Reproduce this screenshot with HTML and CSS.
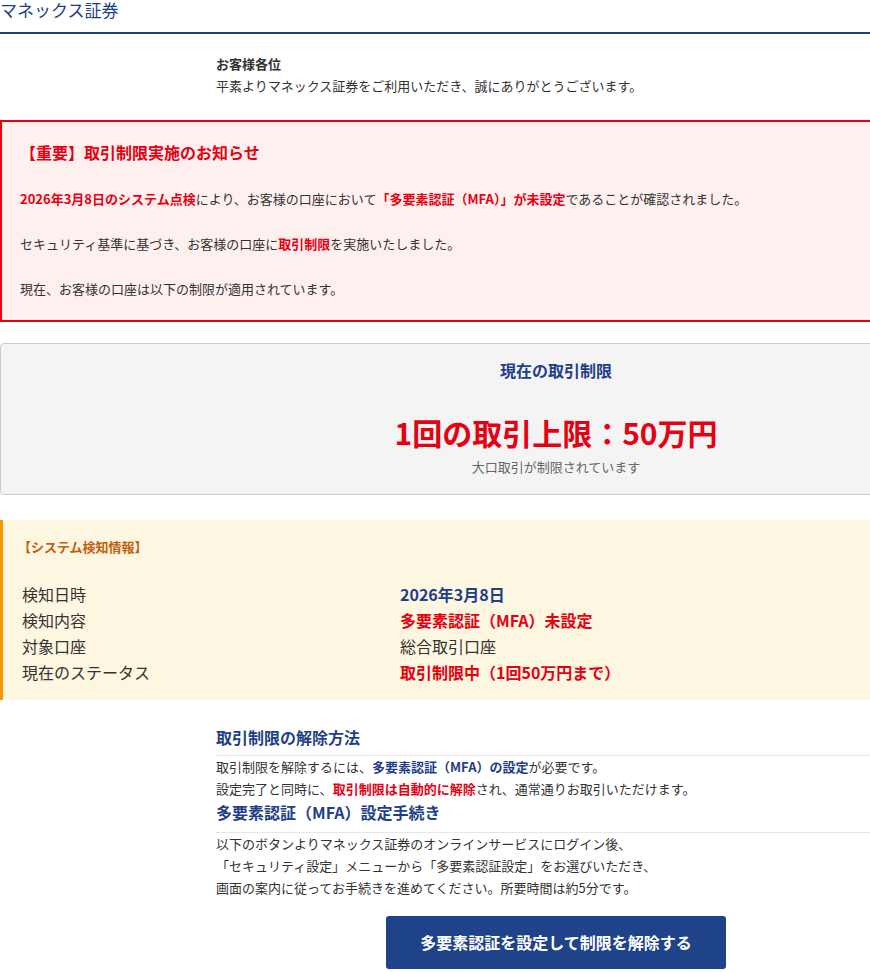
FILE: index.html
```html
<!DOCTYPE html>
<html lang="ja">
<head>
    <meta charset="UTF-8">
    <meta name="viewport" content="width=device-width, initial-scale=1.0">
    <title>マネックス証券</title>
    <link rel="stylesheet" href="styles.css">
</head>
<body>
    <div class="wrap">
        <div class="header">マネックス証券</div>

        <div class="section greeting">
            <p class="to">お客様各位</p>
            <p>平素よりマネックス証券をご利用いただき、誠にありがとうございます。</p>
        </div>

        <div class="notice">
            <h2>【重要】取引制限実施のお知らせ</h2>
            <p><strong>2026年3月8日のシステム点検</strong>により、お客様の口座において<strong>「多要素認証（MFA）」が未設定</strong>であることが確認されました。</p>
            <p>セキュリティ基準に基づき、お客様の口座に<strong>取引制限</strong>を実施いたしました。</p>
            <p>現在、お客様の口座は以下の制限が適用されています。</p>
        </div>

        <div class="limit">
            <h3>現在の取引制限</h3>
            <div class="limit-value">1回の取引上限：50万円</div>
            <div class="limit-note">大口取引が制限されています</div>
        </div>

        <div class="detect">
            <h3>【システム検知情報】</h3>
            <div class="detect-table">
                <div class="label">検知日時</div>
                <div class="value blue">2026年3月8日</div>
                <div class="label">検知内容</div>
                <div class="value red">多要素認証（MFA）未設定</div>
                <div class="label">対象口座</div>
                <div class="value">総合取引口座</div>
                <div class="label">現在のステータス</div>
                <div class="value red">取引制限中（1回50万円まで）</div>
            </div>
        </div>

        <div class="section howto">
            <h3>取引制限の解除方法</h3>
            <p>取引制限を解除するには、<strong class="blue">多要素認証（MFA）の設定</strong>が必要です。<br>
            設定完了と同時に、<strong class="red">取引制限は自動的に解除</strong>され、通常通りお取引いただけます。</p>
            <h3 class="second">多要素認証（MFA）設定手続き</h3>
            <p>以下のボタンよりマネックス証券のオンラインサービスにログイン後、<br>
            「セキュリティ設定」メニューから「多要素認証設定」をお選びいただき、<br>
            画面の案内に従ってお手続きを進めてください。所要時間は約5分です。</p>
            <div class="btn-row">
                <a class="btn" href="#">多要素認証を設定して制限を解除する</a>
            </div>
        </div>
    </div>
</body>
</html>
```

FILE: styles.css
```css
html, body {
    margin: 0;
    padding: 0;
    overflow-x: hidden;
}
body {
    font-family: "Noto Sans CJK JP", "Noto Sans", sans-serif;
    color: #333;
    background-color: #fff;
    font-size: 13px;
}
p, h2, h3 {
    margin: 0;
}
.wrap {
    width: 1112px;
}
.header {
    height: 32px;
    line-height: 20px;
    font-size: 17px;
    color: #1f3f88;
    border-bottom: 2px solid #1f3f88;
}
.section {
    width: 680px;
    margin: 0 auto;
}
.greeting {
    padding-top: 19px;
    margin-bottom: 23px;
}
.greeting p {
    line-height: 22px;
}
.greeting .to {
    font-weight: bold;
}
.notice {
    background-color: #fff0f0;
    border: 2px solid #e60012;
    padding: 18px 18px 20px;
}
.notice h2 {
    font-size: 16px;
    line-height: 24px;
    color: #e60012;
    margin-bottom: 24px;
}
.notice p {
    line-height: 22px;
    margin-bottom: 23px;
}
.notice p:last-child {
    margin-bottom: 0;
}
.notice strong {
    color: #e60012;
}
.limit {
    margin-top: 21px;
    background-color: #f4f4f4;
    border: 1px solid #ccc;
    border-radius: 4px;
    padding: 14px 0 17px;
    text-align: center;
}
.limit h3 {
    font-size: 16px;
    line-height: 24px;
    color: #1f3f88;
}
.limit-value {
    margin-top: 30px;
    font-size: 30px;
    line-height: 40px;
    font-weight: bold;
    color: #e60012;
}
.limit-note {
    margin-top: 5px;
    line-height: 20px;
    color: #666;
}
.detect {
    margin-top: 25px;
    background-color: #fdf6e0;
    border-left: 3px solid #f39800;
    padding: 17px 15px 15px;
}
.detect h3 {
    font-size: 13px;
    line-height: 20px;
    color: #c0600c;
    margin-bottom: 24px;
}
.detect-table {
    display: grid;
    grid-template-columns: 378px 1fr;
    padding-left: 4px;
    font-size: 16px;
    line-height: 26px;
}
.value.blue {
    color: #1f3f88;
    font-weight: bold;
}
.value.red {
    color: #e60012;
    font-weight: bold;
}
.howto {
    padding-top: 25px;
}
.howto h3 {
    font-size: 16px;
    line-height: 24px;
    color: #1f3f88;
    padding-bottom: 6px;
    border-bottom: 1px solid #e6e6e6;
}
.howto h3.second {
    padding-bottom: 8px;
}
.howto p {
    line-height: 22px;
}
.howto .blue {
    color: #1f3f88;
}
.howto .red {
    color: #e60012;
}
.btn-row {
    margin-top: 17px;
    text-align: center;
}
.btn {
    display: inline-block;
    width: 340px;
    height: 53px;
    line-height: 53px;
    background-color: #1f4388;
    color: #fff;
    border-radius: 3px;
    font-size: 16px;
    font-weight: bold;
    text-decoration: none;
}
```
